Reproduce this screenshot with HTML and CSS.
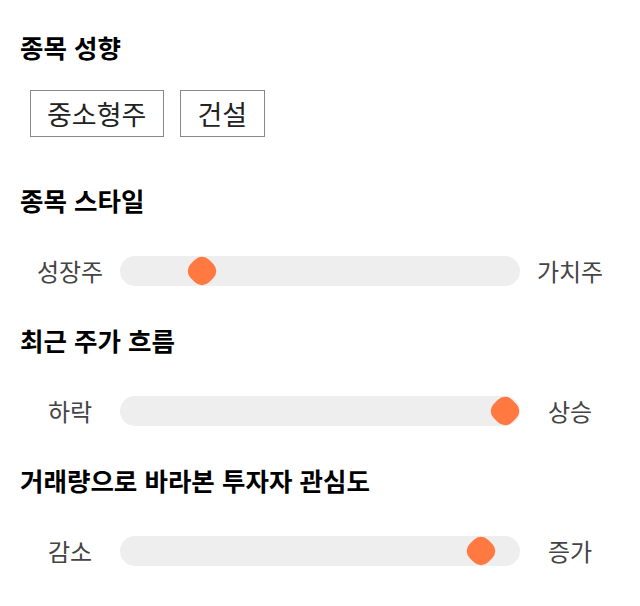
FILE: index.html
```html
<!DOCTYPE html>
<html lang="ko">
<head>
<meta charset="utf-8">
<link rel="stylesheet" href="styles.css">
</head>
<body>
<div class="page">
  <section class="sec sec-first">
    <h2 class="title">종목 성향</h2>
    <div class="tags">
      <span class="tag">중소형주</span>
      <span class="tag">건설</span>
    </div>
  </section>
  <section class="sec">
    <h2 class="title">종목 스타일</h2>
    <div class="row">
      <span class="lab">성장주</span>
      <div class="track"><span class="thumb" style="left: 20.5%"></span></div>
      <span class="lab">가치주</span>
    </div>
  </section>
  <section class="sec">
    <h2 class="title">최근 주가 흐름</h2>
    <div class="row">
      <span class="lab">하락</span>
      <div class="track"><span class="thumb" style="left: 96.25%"></span></div>
      <span class="lab">상승</span>
    </div>
  </section>
  <section class="sec">
    <h2 class="title">거래량으로 바라본 투자자 관심도</h2>
    <div class="row">
      <span class="lab">감소</span>
      <div class="track"><span class="thumb" style="left: 90.25%"></span></div>
      <span class="lab">증가</span>
    </div>
  </section>
</div>
</body>
</html>
```
FILE: styles.css
```css
* { box-sizing: border-box; }
html, body { margin: 0; padding: 0; background: #fff; }
body {
  font-family: "Noto Sans CJK KR", "Noto Sans", sans-serif;
  color: #333;
}
.page {
  padding: 32px 20px 0 20px;
  display: flex;
  flex-direction: column;
  gap: 34px;
}
.sec { display: flex; flex-direction: column; gap: 36px; }
.sec-first { gap: 28px; margin-bottom: 14px; }
.title {
  margin: 0;
  font-size: 25.5px;
  line-height: 30px;
  font-weight: 700;
  color: #000;
}
.tags { display: flex; gap: 16px; padding-left: 10px; }
.tag {
  border: 1px solid #888;
  padding: 5px 17px 5px 16px;
  font-size: 27px;
  line-height: 35px;
  color: #222;
}
.row {
  display: flex;
  align-items: center;
  height: 40px;
}
.lab {
  width: 100px;
  flex: none;
  text-align: center;
  font-size: 24px;
  line-height: 30px;
  color: #444;
}
.track {
  flex: 1;
  height: 30px;
  background: #eeeeee;
  border-radius: 15px;
  position: relative;
}
.thumb {
  position: absolute;
  top: 50%;
  width: 26px;
  height: 26px;
  margin: -13px 0 0 -13px;
  background: #ff7940;
  border-radius: 10px;
  transform: rotate(45deg);
}
```
